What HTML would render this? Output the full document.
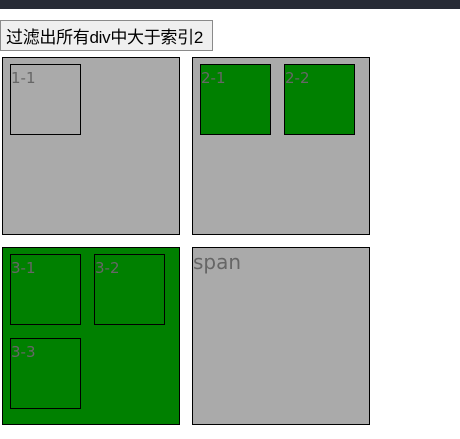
<!DOCTYPE html>
<html><head><meta charset="utf-8"><style>
body{margin:0;width:460px;height:439px;background:#fff;position:relative;overflow:hidden;font-family:"DejaVu Sans","Liberation Sans",sans-serif}
.bar{position:absolute;left:0;top:0;width:460px;height:9px;background:#272b35}
button{position:absolute;left:0;top:20px;width:213px;height:31px;background:#efefef;border:1px solid #8a8a8a;font:17px "Liberation Sans","Noto Sans CJK SC",sans-serif;color:#000;padding:0 0 0 5px;margin:0;white-space:nowrap;text-align:left;letter-spacing:-0.3px}
.o{position:absolute;width:176px;height:176px;border:1px solid #000;background:#aaa}
.i{position:absolute;width:69px;height:69px;border:1px solid #000;color:#666;font-size:15px;line-height:26px}
.g{background:#008000}
.s{position:absolute;left:0;top:1px;color:#666;font-size:20px;line-height:26px}
</style></head><body>
<div class="bar"></div>
<button>过滤出所有div中大于索引2</button>
<div class="o" style="left:2px;top:57px"><div class="i" style="left:7px;top:6px">1-1</div></div>
<div class="o" style="left:192px;top:57px"><div class="i g" style="left:7px;top:6px">2-1</div><div class="i g" style="left:91px;top:6px">2-2</div></div>
<div class="o g" style="left:2px;top:247px"><div class="i g" style="left:7px;top:6px">3-1</div><div class="i g" style="left:91px;top:6px">3-2</div><div class="i g" style="left:7px;top:90px">3-3</div></div>
<div class="o" style="left:192px;top:247px"><span class="s">span</span></div>
</body></html>
